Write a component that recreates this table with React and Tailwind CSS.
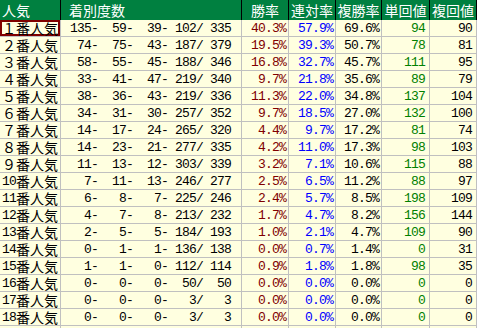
import React from 'react';

const rows = [
  [135, 59, 39, 102, 335, '40.3', '57.9', '69.6', 94, 90],
  [74, 75, 43, 187, 379, '19.5', '39.3', '50.7', 78, 81],
  [58, 55, 45, 188, 346, '16.8', '32.7', '45.7', 111, 95],
  [33, 41, 47, 219, 340, '9.7', '21.8', '35.6', 89, 79],
  [38, 36, 43, 219, 336, '11.3', '22.0', '34.8', 137, 104],
  [34, 31, 30, 257, 352, '9.7', '18.5', '27.0', 132, 100],
  [14, 17, 24, 265, 320, '4.4', '9.7', '17.2', 81, 74],
  [14, 23, 21, 277, 335, '4.2', '11.0', '17.3', 98, 103],
  [11, 13, 12, 303, 339, '3.2', '7.1', '10.6', 115, 88],
  [7, 11, 13, 246, 277, '2.5', '6.5', '11.2', 88, 97],
  [6, 8, 7, 225, 246, '2.4', '5.7', '8.5', 198, 109],
  [4, 7, 8, 213, 232, '1.7', '4.7', '8.2', 156, 144],
  [2, 5, 5, 184, 193, '1.0', '2.1', '4.7', 109, 90],
  [0, 1, 1, 136, 138, '0.0', '0.7', '1.4', 0, 31],
  [1, 1, 0, 112, 114, '0.9', '1.8', '1.8', 98, 35],
  [0, 0, 0, 50, 50, '0.0', '0.0', '0.0', 0, 0],
  [0, 0, 0, 3, 3, '0.0', '0.0', '0.0', 0, 0],
  [0, 0, 0, 3, 3, '0.0', '0.0', '0.0', 0, 0],
];

const pad = (n) => String(n).padStart(4, ' ');
const mono = "font-['Liberation_Mono',monospace] text-[13px] tracking-[-0.8px]";
const jp = "font-['Noto_Sans_CJK_JP',sans-serif] text-[14px]";

function Label({ n, selected }) {
  const box = selected ? 'border-[#800000]' : 'border-transparent';
  return (
    <div className={`h-full border-2 ${box} flex items-center whitespace-nowrap ${jp} text-black`}>
      {n < 10 ? (
        <span>{String.fromCharCode(0xff10 + n)}</span>
      ) : (
        <span className={mono}>{n}</span>
      )}
      <span>番人気</span>
    </div>
  );
}

function Row({ r, i }) {
  const [a, b, c, d, e, win, ren, fuku, tan, fk] = r;
  const num = `h-full flex items-center justify-end border-r border-[#c0c0c0] ${mono}`;
  return (
    <div className="flex h-[17px] border-b border-[#c0c0c0] bg-[#ffffe0] leading-[15px]">
      <div className="w-[61px] h-full border-r border-[#c0c0c0]">
        <Label n={i + 1} selected={i === 0} />
      </div>
      <div className={`w-[181px] h-full flex items-center border-r border-[#c0c0c0] pl-[2px] whitespace-pre text-black ${mono}`}>
        {`${pad(a)}-${pad(b)}-${pad(c)}-${pad(d)}/${pad(e)}`}
      </div>
      <div className={`w-[47px] pr-[2px] text-[#800000] ${num}`}>{win}%</div>
      <div className={`w-[47px] pr-[2px] text-[#0000ff] ${num}`}>{ren}%</div>
      <div className={`w-[46px] pr-[2px] text-black ${num}`}>{fuku}%</div>
      <div className={`w-[48px] pr-[4px] text-[#008000] ${num}`}>{tan}</div>
      <div className={`w-[47px] pr-[4px] text-black ${num}`}>{fk}</div>
    </div>
  );
}

export default function App() {
  const head = `h-full flex items-center border-r border-black text-white ${jp}`;
  return (
    <div className="w-[478px] h-[328px] overflow-hidden bg-white">
      <div className="w-[477px]">
        <div className="flex h-[20px] bg-[#008040] leading-[20px]">
          <div className={`w-[61px] pl-[2px] ${head}`}>人気</div>
          <div className={`w-[181px] pl-[8px] ${head}`}>着別度数</div>
          <div className={`w-[47px] justify-center ${head}`}>勝率</div>
          <div className={`w-[47px] justify-center ${head}`}>連対率</div>
          <div className={`w-[46px] justify-center ${head}`}>複勝率</div>
          <div className={`w-[48px] justify-center ${head}`}>単回値</div>
          <div className={`w-[47px] justify-center ${head}`}>複回値</div>
        </div>
        {rows.map((r, i) => (
          <Row key={i} r={r} i={i} />
        ))}
        <div className="flex h-[17px] bg-[#ffffe0]">
          <div className="w-[61px] border-r border-[#c0c0c0]" />
          <div className="w-[181px] border-r border-[#c0c0c0]" />
          <div className="w-[47px] border-r border-[#c0c0c0]" />
          <div className="w-[47px] border-r border-[#c0c0c0]" />
          <div className="w-[46px] border-r border-[#c0c0c0]" />
          <div className="w-[48px] border-r border-[#c0c0c0]" />
          <div className="w-[47px] border-r border-[#c0c0c0]" />
        </div>
      </div>
    </div>
  );
}
